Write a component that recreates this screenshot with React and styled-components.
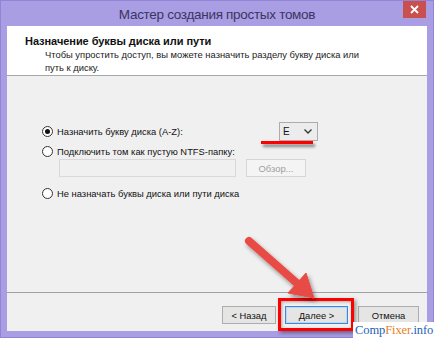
import React from "react";
import styled, { createGlobalStyle } from "styled-components";

const GlobalStyle = createGlobalStyle`
html, body {
  margin: 0;
  padding: 0;
  width: 434px;
  height: 338px;
  overflow: hidden;
}
`
const Window = styled.div`
position: relative;
width: 434px;
height: 338px;
box-sizing: border-box;
background: #a99de4;
border: 1px solid #9184d6;
display: flex;
flex-direction: column;
font-family: "Liberation Sans", Arial, sans-serif;
color: #111;
`
const TitleBar = styled.div`
height: 25px;
display: grid;
grid-template-columns: 1fr auto 1fr;
`
const Title = styled.div`
grid-column: 2;
font-size: 13.5px;
color: #3a3660;
line-height: 27px;
letter-spacing: -0.3px;
`
const CloseButton = styled.div`
grid-column: 3;
justify-self: end;
width: 23px;
height: 17px;
margin-right: 7px;
background: #c9504f;
color: #fff;
display: flex;
align-items: center;
justify-content: center;
`
const Frame = styled.div`
flex: 1;
margin: 0 6px 6px;
display: flex;
flex-direction: column;
`
const Header = styled.div`
height: 50px;
background: #fff;
border-bottom: 1px solid #a8a8a8;
padding: 9px 0 0 18px;
box-sizing: border-box;
`
const Heading = styled.div`
font-size: 11px;
font-weight: bold;
line-height: 13px;
letter-spacing: -0.05px;
`
const Description = styled.div`
font-size: 9.4px;
line-height: 13px;
margin-left: 20px;
width: 330px;
color: #222;
`
const Body = styled.div`
flex: 1;
background: #f0f0f0;
padding: 45px 0 0 35px;
display: flex;
flex-direction: column;
`
const Row = styled.div`
height: 20px;
display: flex;
align-items: center;
margin-top: ${p => p.$gap || 0}px;
`
const Radio = styled.span`
width: 11px;
height: 11px;
border-radius: 50%;
border: 1px solid #333;
background: #fff;
box-sizing: border-box;
display: flex;
align-items: center;
justify-content: center;
flex: none;
&::after {
  content: "";
  width: 5px;
  height: 5px;
  border-radius: 50%;
  background: ${p => (p.$checked ? "#111" : "transparent")};
}
`
const Label = styled.span`
font-size: 9.4px;
margin-left: 4px;
width: ${p => p.$width || "auto"};
`
const Select = styled.div`
width: 39px;
height: 19px;
box-sizing: border-box;
border: 1px solid #acacac;
background: #ececec;
display: flex;
align-items: center;
justify-content: space-between;
padding: 0 5px 0 3px;
font-size: 10px;
`
const PathRow = styled.div`
display: flex;
align-items: center;
margin: -3px 0 0 17px;
height: 20px;
`
const PathInput = styled.div`
width: 177px;
height: 18px;
box-sizing: border-box;
border: 1px solid #d9d9d9;
background: #f0f0f0;
`
const Button = styled.div`
width: ${p => p.$width || 61}px;
height: 18px;
box-sizing: border-box;
border: 1px solid ${p => (p.$default ? "#3c8ad8" : p.$disabled ? "#d6d6d6" : "#adadad")};
background: ${p => (p.$disabled ? "#f4f4f4" : "#e5e5e5")};
color: ${p => (p.$disabled ? "#a0a0a0" : "#111")};
font-size: 9.4px;
display: flex;
align-items: center;
justify-content: center;
margin-left: ${p => p.$offset || 0}px;
box-shadow: ${p => (p.$default ? "inset 0 0 0 1px #b8d8f6" : "none")};
`
const Footer = styled.div`
height: 39px;
border-top: 1px solid #a0a0a0;
background: #f0f0f0;
box-sizing: border-box;
display: flex;
justify-content: flex-end;
align-items: flex-start;
padding: 13px 8px 0 0;
`
const Underline = styled.div`
position: absolute;
left: 260px;
top: 140px;
width: 52px;
height: 3px;
background: #f00;
box-shadow: 2px 3px 3px rgba(0, 0, 0, 0.45);
`
const Highlight = styled.div`
position: absolute;
left: 277px;
top: 297px;
width: 76px;
height: 33px;
box-sizing: border-box;
border: 3px solid #f00;
box-shadow: 2px 2px 4px rgba(0, 0, 0, 0.4), inset 1px 1px 3px rgba(0, 0, 0, 0.3);
`
const Overlay = styled.svg`
position: absolute;
left: 0;
top: 0;
pointer-events: none;
`
const Watermark = styled.div`
position: absolute;
left: 352px;
top: 321px;
width: 82px;
height: 17px;
background: #fff;
font-family: "Liberation Serif", "DejaVu Serif", serif;
font-size: 12.5px;
line-height: 17px;
color: #1d63b8;
padding-left: 2px;
box-sizing: border-box;
white-space: nowrap;
letter-spacing: -0.1px;
`
const Fixer = styled.span`
color: #e8811f;
`

function App() {
  return (
    <>
      <GlobalStyle />
      <Window>
        <TitleBar>
          <Title>Мастер создания простых томов</Title>
          <CloseButton>
            <svg width="9" height="9" viewBox="0 0 9 9">
              <path d="M1 1 L8 8 M8 1 L1 8" stroke="#fff" strokeWidth="1.8" />
            </svg>
          </CloseButton>
        </TitleBar>
        <Frame>
          <Header>
            <Heading>Назначение буквы диска или пути</Heading>
            <Description>
              Чтобы упростить доступ, вы можете назначить разделу букву диска или путь к диску.
            </Description>
          </Header>
          <Body>
            <Row>
              <Radio $checked />
              <Label $width="222px">Назначить букву диска (A-Z):</Label>
              <Select>
                <span>E</span>
                <svg width="8" height="5" viewBox="0 0 8 5">
                  <path d="M0.5 0.5 L4 4 L7.5 0.5" fill="none" stroke="#333" strokeWidth="1.3" />
                </svg>
              </Select>
            </Row>
            <Row>
              <Radio />
              <Label>Подключить том как пустую NTFS-папку:</Label>
            </Row>
            <PathRow>
              <PathInput />
              <Button $disabled $width={60} $offset={10}>Обзор...</Button>
            </PathRow>
            <Row $gap={5}>
              <Radio />
              <Label>Не назначать буквы диска или пути диска</Label>
            </Row>
          </Body>
          <Footer>
            <Button $width={54}>&lt; Назад</Button>
            <Button $width={63} $offset={9} $default>Далее &gt;</Button>
            <Button $width={61} $offset={10}>Отмена</Button>
          </Footer>
        </Frame>
        <Underline />
        <Highlight />
        <Overlay width="434" height="338" viewBox="0 0 434 338">
          <defs>
            <filter id="shadow" x="-20%" y="-20%" width="150%" height="150%">
              <feDropShadow dx="2" dy="3" stdDeviation="2" floodColor="#000" floodOpacity="0.4" />
            </filter>
          </defs>
          <g filter="url(#shadow)" fill="#e84c45" stroke="#e84c45">
            <line x1="248" y1="240" x2="298" y2="284" strokeWidth="8" strokeLinecap="round" />
            <polygon points="313,297 287,292 305,272" strokeWidth="1" strokeLinejoin="round" />
          </g>
        </Overlay>
        <Watermark>
          Comp<Fixer>Fixer</Fixer>.info
        </Watermark>
      </Window>
    </>
  );
}

export default App;
